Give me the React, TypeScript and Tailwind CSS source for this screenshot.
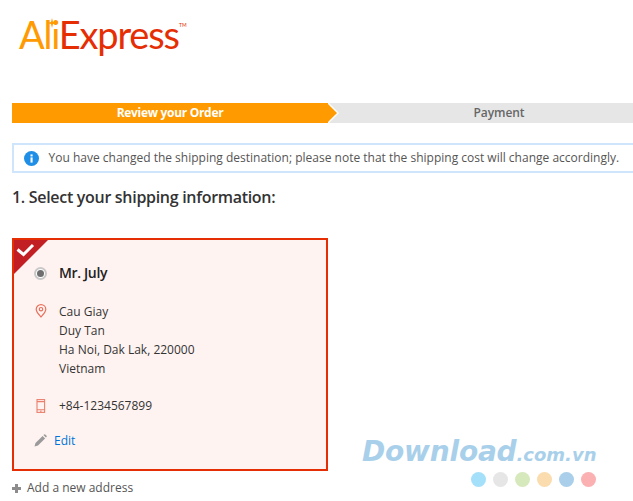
import React from "react";

function Pin() {
  return (
    <svg width="12" height="14" viewBox="0 0 12 14" fill="none" stroke="#e8705c" strokeWidth="1.2">
      <path d="M6 13 C4 10.5 1.2 8 1.2 5.2 A4.8 4.6 0 0 1 10.8 5.2 C10.8 8 8 10.5 6 13 Z" />
      <circle cx="6" cy="5.2" r="1.7" />
    </svg>
  );
}

function Phone() {
  return (
    <svg width="10" height="14" viewBox="0 0 10 14" fill="none" stroke="#ea7f6e" strokeWidth="1.1">
      <rect x="1" y="0.6" width="7.6" height="12.8" />
      <path d="M1 2.6H8.6M1 10.8H8.6M4 12.2H5.6" />
    </svg>
  );
}

function Pencil() {
  return (
    <svg width="13" height="13" viewBox="0 0 13 13" fill="#9a9a9a">
      <path d="M0.5 12.5 L1.5 9 L8.6 1.9 L11.1 4.4 L4 11.5 Z" />
      <path d="M9.4 1.1 L10.2 0.4 Q10.7 0 11.2 0.4 L12.6 1.8 Q13 2.3 12.6 2.8 L11.9 3.6 Z" />
    </svg>
  );
}

const dots = ["bg-[#a5e0fb]", "bg-[#e6e6e6]", "bg-[#d6e9bd]", "bg-[#fbdcae]", "bg-[#a9cfea]", "bg-[#fbb0b2]"];

export default function App() {
  return (
    <div className="relative w-[633px] h-[501px] overflow-hidden bg-white font-['Open_Sans',sans-serif] text-[#333]">
      <header className="h-[103px] pl-[19px] pt-[9px]">
        <div className="relative w-[170px] h-[50px] text-[38px] leading-[50px] tracking-[-1.2px] font-['Lato',sans-serif] font-normal whitespace-nowrap">
          <span className="text-[#ff9a00]">Ali</span>
          <span className="text-[#e62e04]">Express</span>
          <span className="absolute left-[160px] top-[13px] text-[5px] leading-[6px] tracking-normal text-[#e62e04]">TM</span>
          <svg className="absolute left-[28px] top-[9px]" width="10" height="10" viewBox="0 0 10 10">
            <path d="M5 0 L6 4 L10 5 L6 6 L5 10 L4 6 L0 5 L4 4 Z" fill="#ff9a00" />
          </svg>
        </div>
      </header>

      <nav className="ml-3 flex h-5 w-[621px] bg-[#e6e6e6] text-xs font-[550] leading-5">
        <div className="relative w-[316px] bg-[#ff9a00] text-center text-white">
          <span className="tracking-[-0.3px] font-bold">Review your Order</span>
          <svg className="absolute left-full top-0" width="11" height="20" viewBox="0 0 11 20">
            <path d="M0 0 L10 10 L0 20 Z" fill="#ff9a00" />
            <path d="M0 0 L10 10 L0 20" fill="none" stroke="#fff" strokeWidth="1.4" />
          </svg>
        </div>
        <div className="flex-1 pl-[37px] text-center text-[#666] tracking-[-0.1px]">Payment</div>
      </nav>

      <div className="mt-5 ml-3 flex h-[30px] w-[630px] items-center border-2 border-[#cfe5fb] pl-[10px] text-xs text-[#555] whitespace-nowrap">
        <svg width="15" height="15" viewBox="0 0 15 15" className="mr-[9.5px] shrink-0">
          <circle cx="7.5" cy="7.5" r="7.5" fill="#1e8ee6" />
          <rect x="6.5" y="6.4" width="2.1" height="5.2" fill="#fff" />
          <rect x="6.5" y="3.4" width="2.1" height="2" fill="#fff" />
        </svg>
        You have changed the shipping destination; please note that the shipping cost will change accordingly.
      </div>

      <h1 className="mt-3 ml-3 text-base leading-6 font-[550] tracking-[-0.3px] text-[#333]">1. Select your shipping information:</h1>

      <section className="relative mt-[29px] ml-3 h-[233px] w-[316px] border-2 border-[#e62e04] bg-[#fff3f1] text-xs leading-[19px] text-[#333]">
        <svg className="absolute left-0 top-0" width="34" height="34" viewBox="0 0 34 34">
          <path d="M0 0 H34 L0 34 Z" fill="#c21f24" />
          <path d="M3.5 9.5 L9.5 14.5 L19 5" fill="none" stroke="#fff" strokeWidth="3" />
        </svg>

        <div className="flex items-center pl-5 pt-[23px]">
          <span className="flex h-[13px] w-[13px] items-center justify-center rounded-full border-2 border-[#c8c8c8] bg-white">
            <span className="h-[7px] w-[7px] rounded-full bg-[#6f6f6f]" />
          </span>
          <span className="ml-3 text-sm leading-[20px] font-semibold tracking-[-0.35px] text-[#222]">Mr. July</span>
        </div>

        <div className="flex pt-[19px] pl-[21px]">
          <span className="w-6 pt-[2px]"><Pin /></span>
          <div>
            <div>Cau Giay</div>
            <div>Duy Tan</div>
            <div>Ha Noi, Dak Lak, 220000</div>
            <div>Vietnam</div>
          </div>
        </div>

        <div className="flex pt-[18px] pl-[22px]">
          <span className="w-[23px] pt-[3px]"><Phone /></span>
          <div>+84-1234567899</div>
        </div>

        <div className="flex items-center pt-4 pl-5">
          <span className="w-5"><Pencil /></span>
          <a className="text-[#0073d9]">Edit</a>
        </div>
      </section>

      <div className="mt-[7px] ml-3 flex items-center text-xs leading-5 text-[#555]">
        <svg width="9" height="9" viewBox="0 0 9 9" className="mr-[6px]">
          <path d="M3 0H6V3H9V6H6V9H3V6H0V3H3Z" fill="#8c8c8c" />
        </svg>
        Add a new address
      </div>

      <div className="absolute left-[362px] top-[437px] w-[250px]">
        <div className="text-[28px] leading-[30px] font-['DejaVu_Sans',sans-serif] italic font-bold text-[#a9d0ea] whitespace-nowrap tracking-[-0.2px]">
          Download<span className="text-[18px] tracking-[0px]">.com.vn</span>
        </div>
        <div className="mt-[2px] ml-[109px] flex gap-[7px]">
          {dots.map((c) => (
            <span key={c} className={`h-[15px] w-[15px] rounded-full ${c}`} />
          ))}
        </div>
      </div>
    </div>
  );
}
